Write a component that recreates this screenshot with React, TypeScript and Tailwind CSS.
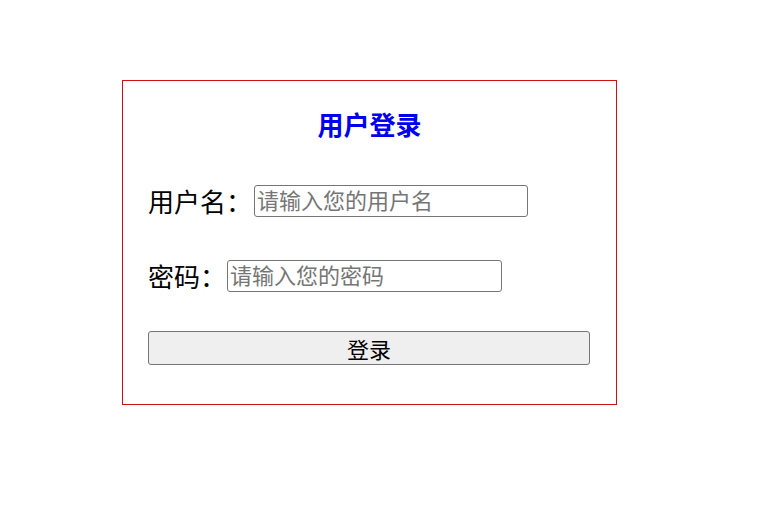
export default function App() {
  const font = { fontFamily: '"Noto Sans CJK SC", "Noto Sans", sans-serif' };
  return (
    <div className="min-h-[511px] bg-white pt-[80px] pl-[122px]" style={font}>
      <div className="flex w-[495px] flex-col border border-[#cc1111] px-[25px] pt-[25px] pb-[39px]">
        <h2 className="h-[38px] text-center text-[26px] leading-[36px] font-bold text-[#0000ee]">用户登录</h2>

        <div className="mt-[41px] flex h-[32px] items-center">
          <label className="text-[26px] leading-[30px] text-black">用户名：</label>
          <input
            placeholder="请输入您的用户名"
            className="ml-[2px] h-[32px] w-[274px] rounded-[3px] border border-[#767676] px-[2px] pb-[3px] text-[22px] text-black placeholder:text-[#757575] outline-none"
          />
        </div>

        <div className="mt-[43px] flex h-[32px] items-center">
          <label className="text-[26px] leading-[30px] text-black">密码：</label>
          <input
            type="password"
            placeholder="请输入您的密码"
            className="ml-[1px] h-[32px] w-[275px] rounded-[3px] border border-[#767676] px-[2px] pb-[3px] text-[22px] text-black placeholder:text-[#757575] outline-none"
          />
        </div>

        <button className="mt-[39px] h-[34px] w-[442px] rounded-[3px] border border-[#767676] bg-[#efefef] text-[22px] leading-[30px] text-black">
          登录
        </button>
      </div>
    </div>
  );
}
